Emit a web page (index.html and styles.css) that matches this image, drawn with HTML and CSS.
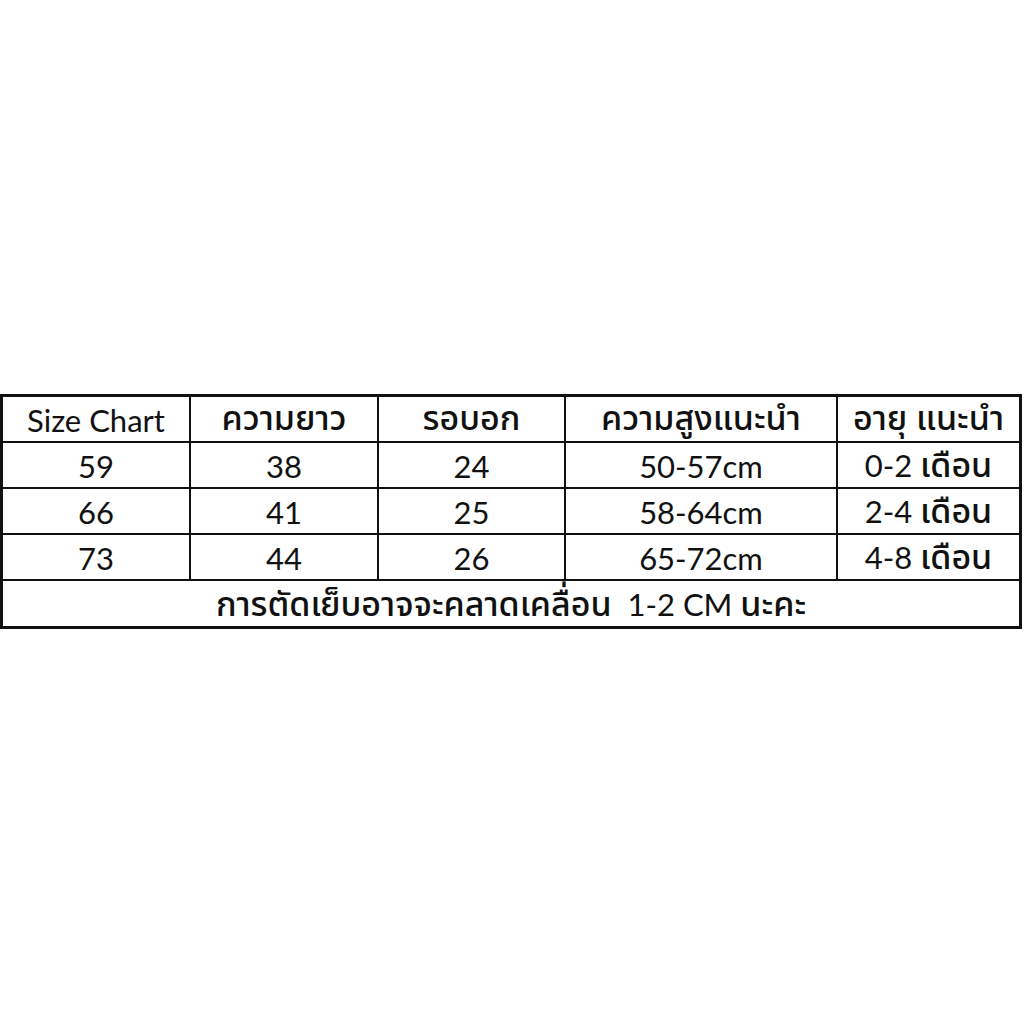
FILE: index.html
```html
<!DOCTYPE html>
<html lang="th">
<head>
<meta charset="utf-8">
<link rel="stylesheet" href="styles.css">
</head>
<body>
<div class="page">
  <div class="chart">
    <div class="cell"><span>Size Chart</span></div>
    <div class="cell"><span class="th">ความยาว</span></div>
    <div class="cell"><span class="th">รอบอก</span></div>
    <div class="cell"><span class="th">ความสูงแนะนำ</span></div>
    <div class="cell"><span class="th">อายุ แนะนำ</span></div>

    <div class="cell"><span>59</span></div>
    <div class="cell"><span>38</span></div>
    <div class="cell"><span>24</span></div>
    <div class="cell"><span>50-57cm</span></div>
    <div class="cell"><span>0-2 <span class="th">เดือน</span></span></div>

    <div class="cell"><span>66</span></div>
    <div class="cell"><span>41</span></div>
    <div class="cell"><span>25</span></div>
    <div class="cell"><span>58-64cm</span></div>
    <div class="cell"><span>2-4 <span class="th">เดือน</span></span></div>

    <div class="cell"><span>73</span></div>
    <div class="cell"><span>44</span></div>
    <div class="cell"><span>26</span></div>
    <div class="cell"><span>65-72cm</span></div>
    <div class="cell"><span>4-8 <span class="th">เดือน</span></span></div>

    <div class="cell footer"><span><span class="th">การตัดเย็บอาจจะคลาดเคลื่อน</span>&nbsp; 1-2 CM <span class="th">นะคะ</span></span></div>
  </div>
</div>
</body>
</html>
```

FILE: styles.css
```css
html, body {
  margin: 0;
  padding: 0;
  background: #ffffff;
}
.page {
  width: 1024px;
  height: 1024px;
  padding-top: 394px;
  box-sizing: border-box;
}
.chart {
  display: grid;
  width: 1022px;
  box-sizing: border-box;
  grid-template-columns: 186px 186px 185px 270px 181px;
  grid-template-rows: 44px 44px 44px 44px 45px;
  gap: 2px;
  padding: 3px;
  background: #111111;
}
.cell {
  background: #ffffff;
  display: flex;
  align-items: center;
  justify-content: center;
  font-family: Lato, "Open Sans", "Noto Sans Thai", "Noto Sans", sans-serif;
  font-size: 31px;
  line-height: 40px;
  color: #111111;
  padding-top: 2px;
  box-sizing: border-box;
  white-space: nowrap;
}
.th {
  font-family: "Noto Sans Thai", "Noto Sans", Tahoma, sans-serif;
  font-weight: 500;
  font-size: 34px;
}
.footer {
  grid-column: 1 / -1;
}
```
